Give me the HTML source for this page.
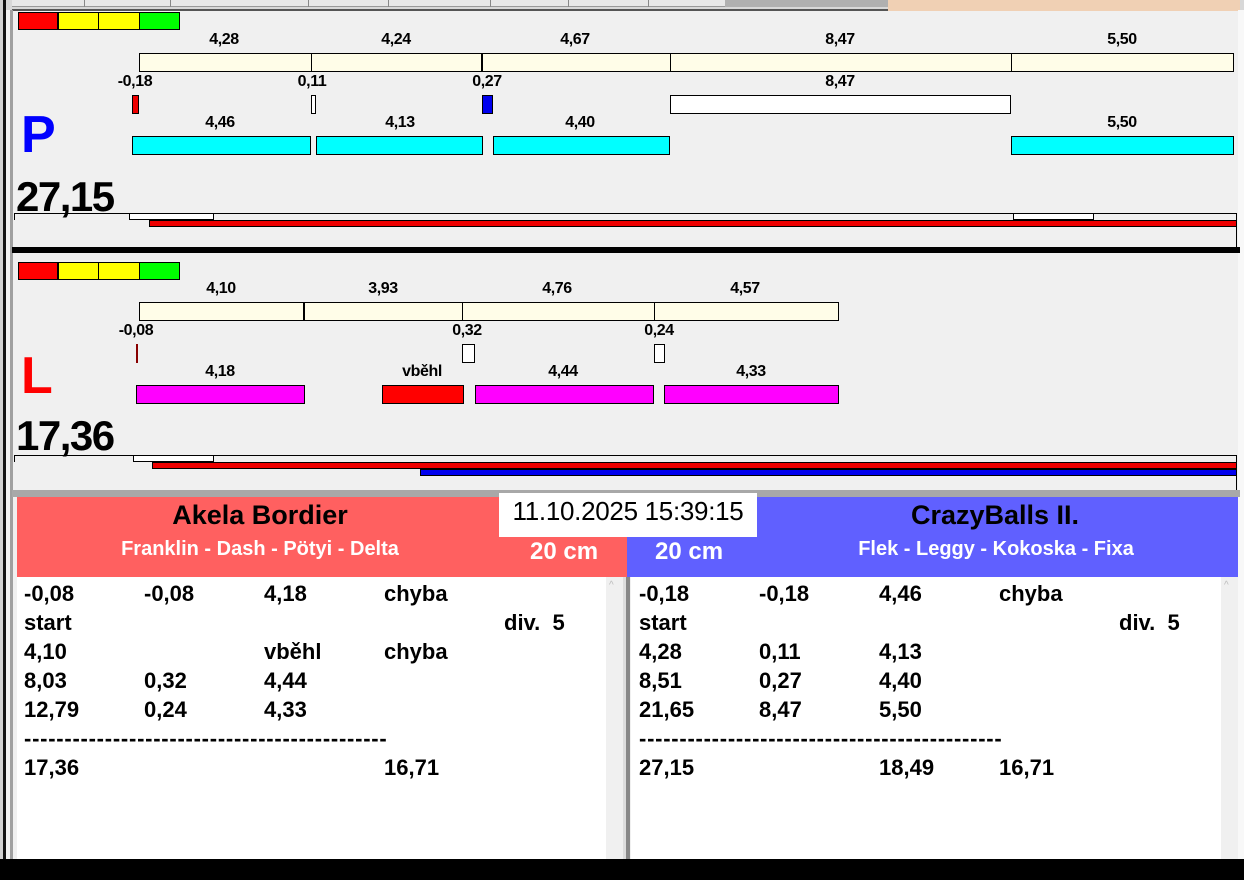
<!DOCTYPE html>
<html><head><meta charset="utf-8"><style>
*{margin:0;padding:0;box-sizing:border-box}
body{width:1244px;height:880px;background:#f0f0f0;position:relative;overflow:hidden;font-family:"Liberation Sans",Arial,sans-serif}
div{position:absolute}
.b{border:1px solid #000}
.t{font-weight:bold;font-size:16px;letter-spacing:-0.4px;transform:translateX(-50%);white-space:nowrap;color:#000;line-height:16px}
.big{font-weight:bold;font-size:42px;letter-spacing:-1.5px;line-height:40px;color:#000}
.r{font-weight:bold;font-size:22px;line-height:29px;color:#000;white-space:nowrap}
</style></head><body>
<!-- top strip -->
<div style="left:0;top:0;width:1244px;height:10px;background:#d8d8d8"></div>
<div style="left:12px;top:0;width:876px;height:7px;background:#e8e8e8;border-bottom:1px solid #999"></div>
<div style="left:84px;top:0;width:1px;height:7px;background:#888"></div>
<div style="left:170px;top:0;width:1px;height:7px;background:#888"></div>
<div style="left:308px;top:0;width:1px;height:7px;background:#888"></div>
<div style="left:388px;top:0;width:1px;height:7px;background:#888"></div>
<div style="left:490px;top:0;width:1px;height:7px;background:#888"></div>
<div style="left:568px;top:0;width:1px;height:7px;background:#888"></div>
<div style="left:648px;top:0;width:1px;height:7px;background:#888"></div>
<div style="left:725px;top:0;width:163px;height:7px;background:#b0b0b0"></div>
<div style="left:888px;top:0;width:352px;height:11px;background:#f0d0b4"></div>
<div style="left:12px;top:9px;width:876px;height:2px;background:#555"></div>
<!-- left border -->
<div style="left:0;top:0;width:3px;height:880px;background:#d0d0d0"></div>
<div style="left:3px;top:0;width:3px;height:880px;background:#111"></div>
<div style="left:10px;top:10px;width:3px;height:850px;background:#a0a0a0"></div>
<div style="left:1238px;top:10px;width:6px;height:850px;background:#f8f8f8"></div>

<!-- P section -->
<div style="left:18px;top:12px;width:40px;height:18px;background:#f00" class="b"></div>
<div style="left:58px;top:12px;width:41px;height:18px;background:#ff0" class="b"></div>
<div style="left:98px;top:12px;width:42px;height:18px;background:#ff0" class="b"></div>
<div style="left:139px;top:12px;width:41px;height:18px;background:#0f0" class="b"></div>

<div class="t" style="left:224px;top:32px">4,28</div>
<div class="t" style="left:396px;top:32px">4,24</div>
<div class="t" style="left:575px;top:32px">4,67</div>
<div class="t" style="left:840px;top:32px">8,47</div>
<div class="t" style="left:1122px;top:32px">5,50</div>
<div class="b" style="left:139px;top:53px;width:173px;height:19px;background:#fffde8"></div>
<div class="b" style="left:311px;top:53px;width:172px;height:19px;background:#fffde8"></div>
<div class="b" style="left:481px;top:53px;width:190px;height:19px;background:#fffde8;border-left-width:2px"></div>
<div class="b" style="left:670px;top:53px;width:342px;height:19px;background:#fffde8"></div>
<div class="b" style="left:1011px;top:53px;width:223px;height:19px;background:#fffde8"></div>

<div class="t" style="left:135px;top:74px">-0,18</div>
<div class="t" style="left:312px;top:74px">0,11</div>
<div class="t" style="left:487px;top:74px">0,27</div>
<div class="t" style="left:840px;top:74px">8,47</div>
<div class="b" style="left:132px;top:95px;width:7px;height:19px;background:#e00"></div>
<div class="b" style="left:311px;top:95px;width:5px;height:19px;background:#fff"></div>
<div class="b" style="left:482px;top:95px;width:11px;height:19px;background:#00e"></div>
<div class="b" style="left:670px;top:95px;width:341px;height:19px;background:#fff"></div>

<div class="t" style="left:220px;top:115px">4,46</div>
<div class="t" style="left:400px;top:115px">4,13</div>
<div class="t" style="left:580px;top:115px">4,40</div>
<div class="t" style="left:1122px;top:115px">5,50</div>
<div class="b" style="left:132px;top:136px;width:179px;height:19px;background:#0ff"></div>
<div class="b" style="left:316px;top:136px;width:167px;height:19px;background:#0ff"></div>
<div class="b" style="left:493px;top:136px;width:177px;height:19px;background:#0ff"></div>
<div class="b" style="left:1011px;top:136px;width:223px;height:19px;background:#0ff"></div>

<div style="left:21px;top:107px;font-weight:bold;font-size:52px;color:#00f;line-height:56px">P</div>
<div class="big" style="left:16px;top:177px">27,15</div>
<div style="left:14px;top:213px;width:1223px;height:1px;background:#000"></div>
<div style="left:14px;top:213px;width:1px;height:7px;background:#000"></div>
<div class="b" style="left:129px;top:213px;width:85px;height:7px;background:#fff"></div>
<div class="b" style="left:1013px;top:213px;width:81px;height:7px;background:#fff"></div>
<div class="b" style="left:149px;top:220px;width:1088px;height:7px;background:#e00"></div>
<div style="left:1236px;top:213px;width:1px;height:35px;background:#000"></div>
<div style="left:12px;top:247px;width:1228px;height:6px;background:#000"></div>

<!-- L section -->
<div style="left:18px;top:262px;width:40px;height:18px;background:#f00" class="b"></div>
<div style="left:58px;top:262px;width:41px;height:18px;background:#ff0" class="b"></div>
<div style="left:98px;top:262px;width:42px;height:18px;background:#ff0" class="b"></div>
<div style="left:139px;top:262px;width:41px;height:18px;background:#0f0" class="b"></div>

<div class="t" style="left:221px;top:281px">4,10</div>
<div class="t" style="left:383px;top:281px">3,93</div>
<div class="t" style="left:557px;top:281px">4,76</div>
<div class="t" style="left:745px;top:281px">4,57</div>
<div class="b" style="left:139px;top:302px;width:166px;height:19px;background:#fffde8"></div>
<div class="b" style="left:303px;top:302px;width:160px;height:19px;background:#fffde8;border-left-width:2px"></div>
<div class="b" style="left:462px;top:302px;width:193px;height:19px;background:#fffde8"></div>
<div class="b" style="left:654px;top:302px;width:185px;height:19px;background:#fffde8"></div>

<div class="t" style="left:136px;top:323px">-0,08</div>
<div class="t" style="left:467px;top:323px">0,32</div>
<div class="t" style="left:659px;top:323px">0,24</div>
<div style="left:136px;top:344px;width:2px;height:19px;background:#800"></div>
<div class="b" style="left:462px;top:344px;width:13px;height:19px;background:#fff"></div>
<div class="b" style="left:654px;top:344px;width:11px;height:19px;background:#fff"></div>

<div class="t" style="left:220px;top:364px">4,18</div>
<div class="t" style="left:422px;top:364px">vběhl</div>
<div class="t" style="left:563px;top:364px">4,44</div>
<div class="t" style="left:751px;top:364px">4,33</div>
<div class="b" style="left:136px;top:385px;width:169px;height:19px;background:#f0f"></div>
<div class="b" style="left:382px;top:385px;width:82px;height:19px;background:#f00"></div>
<div class="b" style="left:475px;top:385px;width:179px;height:19px;background:#f0f"></div>
<div class="b" style="left:664px;top:385px;width:175px;height:19px;background:#f0f"></div>

<div style="left:21px;top:348px;font-weight:bold;font-size:52px;color:#f00;line-height:56px">L</div>
<div class="big" style="left:16px;top:416px">17,36</div>
<div style="left:14px;top:455px;width:1223px;height:1px;background:#000"></div>
<div style="left:14px;top:455px;width:1px;height:7px;background:#000"></div>
<div class="b" style="left:133px;top:455px;width:81px;height:7px;background:#fff"></div>
<div class="b" style="left:152px;top:462px;width:1085px;height:7px;background:#e00"></div>
<div class="b" style="left:420px;top:469px;width:817px;height:7px;background:#00e"></div>
<div style="left:1236px;top:455px;width:1px;height:35px;background:#000"></div>
<div style="left:12px;top:490px;width:1228px;height:7px;background:#a8a8a8"></div>

<!-- bottom headers -->
<div style="left:17px;top:497px;width:611px;height:80px;background:#ff6060"></div>
<div style="left:627px;top:497px;width:611px;height:80px;background:#6060ff"></div>
<div style="left:499px;top:493px;width:258px;height:44px;background:#fff;font-size:26px;line-height:36px;text-align:center;color:#000;letter-spacing:-0.3px">11.10.2025 15:39:15</div>
<div style="left:60px;top:499px;width:400px;text-align:center;font-weight:bold;font-size:27px;line-height:32px">Akela Bordier</div>
<div style="left:60px;top:537px;width:400px;text-align:center;font-weight:bold;font-size:20px;line-height:24px;color:#fff">Franklin - Dash - Pötyi - Delta</div>
<div style="left:530px;top:537px;font-weight:bold;font-size:24px;line-height:30px;color:#fff">20 cm</div>
<div style="left:655px;top:537px;font-weight:bold;font-size:24px;line-height:30px;color:#fff">20 cm</div>
<div style="left:795px;top:499px;width:400px;text-align:center;font-weight:bold;font-size:27px;line-height:32px">CrazyBalls II.</div>
<div style="left:796px;top:537px;width:400px;text-align:center;font-weight:bold;font-size:20px;line-height:24px;color:#fff">Flek - Leggy - Kokoska - Fixa</div>

<!-- lists -->
<div style="left:17px;top:577px;width:589px;height:282px;background:#fff"></div>
<div style="left:606px;top:577px;width:17px;height:282px;background:#f0f0f0"></div>
<div style="left:609px;top:580px;font-size:10px;color:#bbb">^</div>
<div style="left:623px;top:577px;width:5px;height:282px;background:#ddd"></div>
<div style="left:626px;top:577px;width:4px;height:282px;background:#888"></div>
<div style="left:631px;top:577px;width:590px;height:282px;background:#fff"></div>
<div style="left:1221px;top:577px;width:17px;height:282px;background:#f0f0f0"></div>
<div style="left:1224px;top:580px;font-size:10px;color:#bbb">^</div>

<div class="r" style="left:24px;top:579px">-0,08<br>start<br>4,10<br>8,03<br>12,79<br><span style="letter-spacing:0.75px">---------------------------------------------</span><br>17,36</div>
<div class="r" style="left:144px;top:579px">-0,08<br><br><br>0,32<br>0,24</div>
<div class="r" style="left:264px;top:579px">4,18<br><br>vběhl<br>4,44<br>4,33</div>
<div class="r" style="left:384px;top:579px">chyba<br><br>chyba<br><br><br><br>16,71</div>
<div class="r" style="left:504px;top:608px">div.&nbsp;&nbsp;5</div>

<div class="r" style="left:639px;top:579px">-0,18<br>start<br>4,28<br>8,51<br>21,65<br><span style="letter-spacing:0.75px">---------------------------------------------</span><br>27,15</div>
<div class="r" style="left:759px;top:579px">-0,18<br><br>0,11<br>0,27<br>8,47</div>
<div class="r" style="left:879px;top:579px">4,46<br><br>4,13<br>4,40<br>5,50<br><br>18,49</div>
<div class="r" style="left:999px;top:579px">chyba<br><br><br><br><br><br>16,71</div>
<div class="r" style="left:1119px;top:608px">div.&nbsp;&nbsp;5</div>

<div style="left:0;top:859px;width:1244px;height:21px;background:#000"></div>
</body></html>
